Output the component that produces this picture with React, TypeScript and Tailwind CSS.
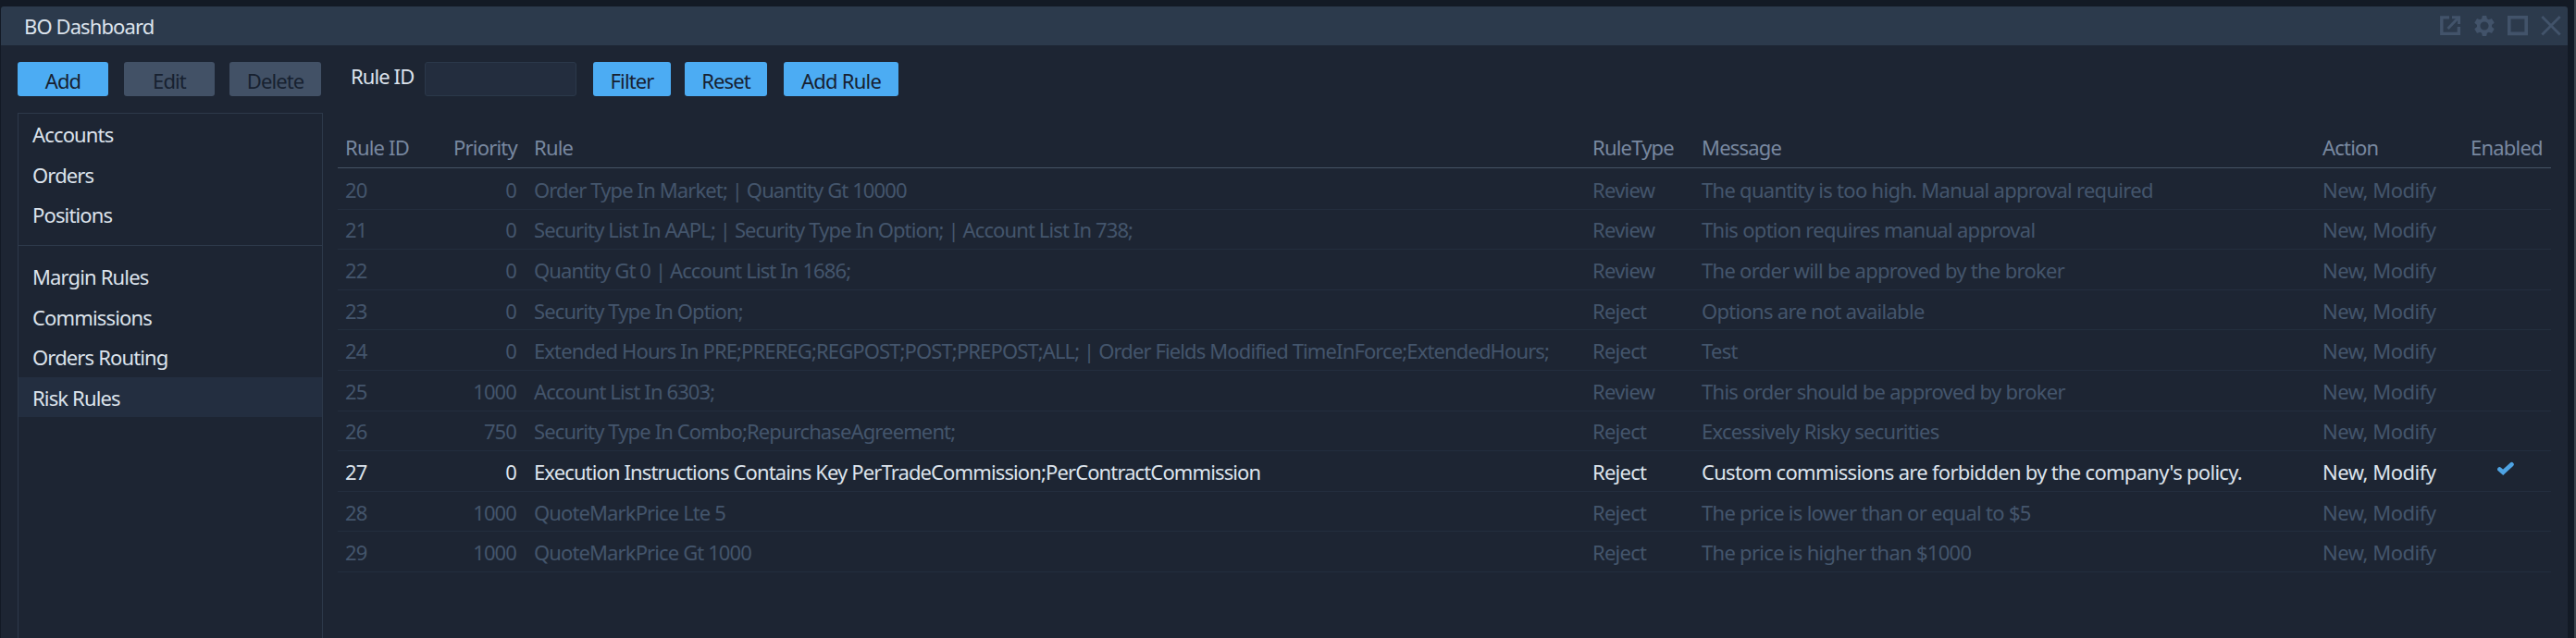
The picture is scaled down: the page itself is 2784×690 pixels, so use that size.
import { useState } from "react";
import clsx from "clsx";

const rules = [
  { id: 20, priority: 0, rule: "Order Type In Market; | Quantity Gt 10000", type: "Review", message: "The quantity is too high. Manual approval required" },
  { id: 21, priority: 0, rule: "Security List In AAPL; | Security Type In Option; | Account List In 738;", type: "Review", message: "This option requires manual approval" },
  { id: 22, priority: 0, rule: "Quantity Gt 0 | Account List In 1686;", type: "Review", message: "The order will be approved by the broker" },
  { id: 23, priority: 0, rule: "Security Type In Option;", type: "Reject", message: "Options are not available" },
  { id: 24, priority: 0, rule: "Extended Hours In PRE;PREREG;REGPOST;POST;PREPOST;ALL; | Order Fields Modified TimeInForce;ExtendedHours;", type: "Reject", message: "Test" },
  { id: 25, priority: 1000, rule: "Account List In 6303;", type: "Review", message: "This order should be approved by broker" },
  { id: 26, priority: 750, rule: "Security Type In Combo;RepurchaseAgreement;", type: "Reject", message: "Excessively Risky securities" },
  { id: 27, priority: 0, rule: "Execution Instructions Contains Key PerTradeCommission;PerContractCommission", type: "Reject", message: "Custom commissions are forbidden by the company's policy.", enabled: true },
  { id: 28, priority: 1000, rule: "QuoteMarkPrice Lte 5", type: "Reject", message: "The price is lower than or equal to $5" },
  { id: 29, priority: 1000, rule: "QuoteMarkPrice Gt 1000", type: "Reject", message: "The price is higher than $1000" },
];

const topItems = ["Accounts", "Orders", "Positions"];
const bottomItems = ["Margin Rules", "Commissions", "Orders Routing", "Risk Rules"];

const columns = "grid grid-cols-[117px_76px_1155px_118px_671px_160px_1fr] items-center pl-2";

const Button = ({ label, className }: { label: string; className?: string }) => (
  <button className={clsx("h-[37px] rounded-[3px] pt-0.5 text-[#172130]", className)}>{label}</button>
);

const TitleIcons = () => (
  <div className="flex items-center gap-[14px] pr-[7px] pb-px text-[#42536a]">
    <svg width="23" height="22" viewBox="0 0 23 22" fill="none" stroke="currentColor" strokeWidth="3.4">
      <path d="M10 1.9H1.8V19.4H20.4V12" />
      <path d="M8.5 14L20 2" strokeWidth="3" />
      <path d="M13 1.8H20.6V9" strokeWidth="3" />
    </svg>
    <svg width="22" height="22" viewBox="0 0 24 24" fill="currentColor">
      <path d="M20.7 13.2a9 9 0 0 0 0-2.4l2.6-2a.6.6 0 0 0 .15-.8l-2.5-4.3a.6.6 0 0 0-.75-.25l-3 1.2a9 9 0 0 0-2.1-1.2L14.6.5a.6.6 0 0 0-.6-.5h-4a.6.6 0 0 0-.6.5L8.9 3.45a9 9 0 0 0-2.1 1.2l-3-1.2a.6.6 0 0 0-.75.25L.55 8a.6.6 0 0 0 .15.8l2.6 2a9 9 0 0 0 0 2.4l-2.6 2a.6.6 0 0 0-.15.8l2.5 4.3c.15.25.45.35.75.25l3-1.2a9 9 0 0 0 2.1 1.2l.5 2.95c.05.3.3.5.6.5h4c.3 0 .55-.2.6-.5l.5-2.95a9 9 0 0 0 2.1-1.2l3 1.2c.3.1.6 0 .75-.25l2.5-4.3a.6.6 0 0 0-.15-.8zM12 17a5 5 0 1 1 0-10 5 5 0 0 1 0 10z" />
    </svg>
    <svg width="22" height="22" viewBox="0 0 22 22" fill="none" stroke="currentColor" strokeWidth="3.6">
      <path d="M1.8 1.8H20.2V19.4H1.8Z" />
    </svg>
    <svg width="22" height="22" viewBox="0 0 22 22" fill="none" stroke="currentColor" strokeWidth="2.8">
      <path d="M1.3 1L20.7 20.4M20.7 1L1.3 20.4" />
    </svg>
  </div>
);

const App = () => {
  const [selected, setSelected] = useState("Risk Rules");
  const [ruleId, setRuleId] = useState("");

  const renderItem = (item: string) => (
    <button
      key={item}
      onClick={() => setSelected(item)}
      className={clsx("block h-[43.6px] w-full pt-px pl-[15px] text-left tracking-[-0.85px]", selected === item && "bg-[#232e40]")}
    >
      {item}
    </button>
  );

  return (
    <div className="flex h-[690px] w-[2784px] flex-col overflow-hidden border-r-2 border-[#3b434c] bg-[#131a25] pt-[7px] pr-[7px] pl-px font-['Noto_Sans','Open_Sans',sans-serif] text-[22px] leading-[30px] tracking-[-0.9px] text-[#dce3ec]">
      {/* Title bar */}
      <header className="flex h-[42px] shrink-0 items-center justify-between rounded-t-[3px] bg-[#2c3a4c] pl-[25px]">
        <h1>BO Dashboard</h1>
        <TitleIcons />
      </header>

      <div className="flex flex-1 bg-[#1d2533] pt-[18px] pl-[18px]">
        {/* Navigation */}
        <aside className="flex w-[330px] flex-col">
          <div className="flex">
            <Button label="Add" className="w-[98px] bg-[#4cacf3]" />
            <Button label="Edit" className="ml-[17px] w-[98px] bg-[#425166]" />
            <Button label="Delete" className="ml-4 w-[99px] bg-[#425166]" />
          </div>
          <nav className="mt-[18px] flex-1 border border-b-0 border-[#2d394a]">
            <div className="h-[143px] border-b border-[#2d394a]">{topItems.map(renderItem)}</div>
            <div className="pt-[11px]">{bottomItems.map(renderItem)}</div>
          </nav>
        </aside>

        {/* Rules */}
        <main className="ml-4 w-[2392px]">
          <div className="flex h-[37px] items-start pl-[14px]">
            <label htmlFor="rule-id" className="w-[80px]">Rule ID</label>
            <input
              id="rule-id"
              value={ruleId}
              onChange={(e) => setRuleId(e.target.value)}
              className="h-[37px] w-[164px] rounded-[3px] border border-[#2b384a] bg-[#232d3e] px-2 outline-none"
            />
            <Button label="Filter" className="ml-[18px] w-[84px] bg-[#4cacf3]" />
            <Button label="Reset" className="ml-[15px] w-[89px] bg-[#4cacf3]" />
            <Button label="Add Rule" className="ml-[18px] w-[124px] bg-[#4cacf3] tracking-[-0.75px]" />
          </div>

          <div className={clsx(columns, "mt-[33px] h-[45px] border-b border-[#455364] tracking-[-0.8px] text-[#7888a0]")}>
            <span>Rule ID</span>
            <span className="w-[68px] text-right">Priority</span>
            <span className="pl-[11px]">Rule</span>
            <span>RuleType</span>
            <span>Message</span>
            <span>Action</span>
            <span>Enabled</span>
          </div>
          <div className="pt-px">
            {rules.map((r) => (
              <div
                key={r.id}
                className={clsx(columns, "h-[43.6px] border-b border-[#232e3e] pt-px", !r.enabled && "text-[#44556c]")}
              >
                <span>{r.id}</span>
                <span className="w-[68px] text-right">{r.priority}</span>
                <span className="pl-[11px] tracking-[-0.88px]">{r.rule}</span>
                <span className="tracking-[-0.75px]">{r.type}</span>
                <span className="tracking-[-0.71px]">{r.message}</span>
                <span className="tracking-[-0.5px]">New, Modify</span>
                {r.enabled && (
                  <svg className="mb-1.5 ml-[29px]" width="18" height="15" viewBox="0 0 18 15" fill="none" stroke="#4ea3e3" strokeWidth="4.6" strokeLinecap="round">
                    <path d="M2.4 8.5L6.2 11.8L15.5 3.2" />
                  </svg>
                )}
              </div>
            ))}
          </div>
        </main>
      </div>
    </div>
  );
};

export default App;
